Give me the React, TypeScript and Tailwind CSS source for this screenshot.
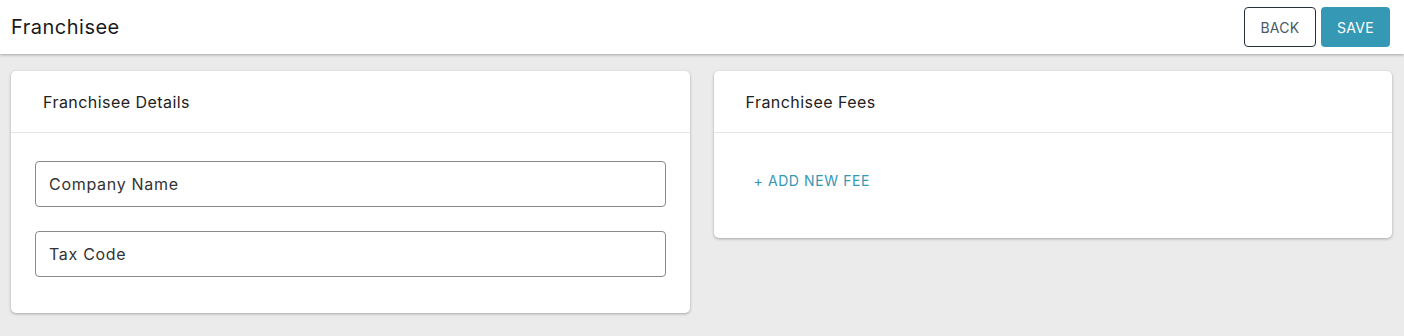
import React from "react";

const font = { fontFamily: "Inter, 'Noto Sans', sans-serif" };

function Field({ label }: { label: string }) {
  return (
    <div className="h-[46px] rounded-[4px] border border-[#8a8a8a] flex items-center px-[13px] text-[16px] text-[#333] tracking-[0.7px]">
      {label}
    </div>
  );
}

function Card({ title, children }: { title: string; children: React.ReactNode }) {
  return (
    <div className="bg-white rounded-[5px] shadow-[0_1px_3px_rgba(0,0,0,0.3)]">
      <div className="h-[62px] flex items-center px-[32px] border-b border-[#e5e5e5] text-[16px] text-[#222] tracking-[0.45px]">
        {title}
      </div>
      {children}
    </div>
  );
}

export default function App() {
  return (
    <div className="min-h-[336px] bg-[#ebebeb]" style={font}>
      {/* Header */}
      <div className="h-[54px] bg-white flex items-center justify-between pl-[11px] pr-[14px] shadow-[0_1px_3px_rgba(0,0,0,0.3)] relative">
        <h1 className="text-[20px] text-[#1a1a1a] tracking-[0.5px]">Franchisee</h1>
        <div className="flex gap-[5px]">
          <button className="h-[40px] w-[72px] rounded-[4px] border border-[#263238] text-[14px] text-[#455a64] bg-white tracking-[0.3px]">
            BACK
          </button>
          <button className="h-[40px] w-[69px] rounded-[4px] bg-[#3598b5] text-[14px] text-white tracking-[0.3px]">
            SAVE
          </button>
        </div>
      </div>

      {/* Content */}
      <div className="grid grid-cols-2 gap-[24px] pl-[11px] pr-[12px] pt-[17px] items-start">
        <Card title="Franchisee Details">
          <div className="px-[24px] pt-[28px] pb-[36px] flex flex-col gap-[24px]">
            <Field label="Company Name" />
            <Field label="Tax Code" />
          </div>
        </Card>
        <Card title="Franchisee Fees">
          <div className="h-[105px] px-[40px] pt-[35px]">
            <button className="text-[14px] text-[#3598b5] tracking-[0.6px]">+ ADD NEW FEE</button>
          </div>
        </Card>
      </div>
    </div>
  );
}
